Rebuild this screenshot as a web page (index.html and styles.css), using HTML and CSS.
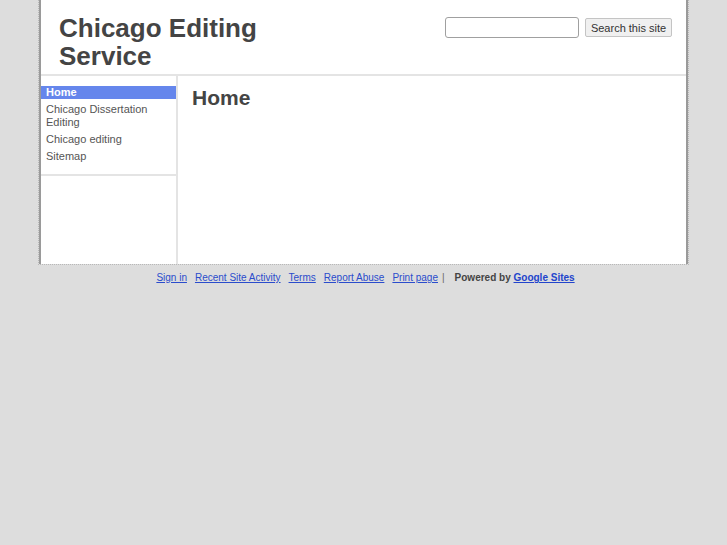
FILE: index.html
```html
<!DOCTYPE html>
<html lang="en">
<head>
<meta charset="utf-8">
<title>Chicago Editing Service</title>
<link rel="stylesheet" href="styles.css">
</head>
<body>
<div class="page">
  <div class="inner">
    <header class="header">
      <h1 class="site-title">Chicago Editing<br>Service</h1>
      <form class="search">
        <input class="search-input" type="text">
        <button class="search-btn" type="button">Search this site</button>
      </form>
    </header>
    <div class="main">
      <aside class="sidebar">
        <ul class="nav">
          <li class="nav-item current">Home</li>
          <li class="nav-item">Chicago Dissertation Editing</li>
          <li class="nav-item">Chicago editing</li>
          <li class="nav-item">Sitemap</li>
        </ul>
      </aside>
      <section class="content">
        <h2 class="page-title">Home</h2>
      </section>
    </div>
  </div>
</div>
<footer class="footer">
  <a class="flink" href="#">Sign in</a><a class="flink" href="#">Recent Site Activity</a><a class="flink" href="#">Terms</a><a class="flink" href="#">Report Abuse</a><a class="flink last" href="#">Print page</a><span class="sep">|</span><span class="powered">Powered by <a class="gs" href="#">Google Sites</a></span>
</footer>
</body>
</html>
```

FILE: styles.css
```css
html, body {
  margin: 0;
  padding: 0;
}
body {
  background: #dddddd;
  font-family: "Liberation Sans", Arial, sans-serif;
  color: #444;
}
.page {
  margin-left: 38px;
  width: 651px;
  box-sizing: border-box;
  border-left: 1px dotted #b8b8b8;
  border-right: 1px dotted #b8b8b8;
  border-bottom: 1px dotted #b8b8b8;
}
.inner {
  background: #fff;
  border-left: 2px solid #9a9a9a;
  border-right: 2px solid #9a9a9a;
}
.header {
  height: 76px;
  box-sizing: border-box;
  border-bottom: 2px solid #e4e4e4;
  display: flex;
  justify-content: space-between;
  align-items: flex-start;
  padding: 0 14px 0 18px;
}
.site-title {
  margin: 0;
  padding-top: 14px;
  font-size: 26px;
  line-height: 28px;
  font-weight: bold;
  color: #444;
}
.search {
  margin: 17px 0 0 0;
  display: flex;
  align-items: flex-start;
  gap: 6px;
}
.search-input {
  width: 134px;
  height: 21px;
  box-sizing: border-box;
  border: 1px solid #a0a0a0;
  border-radius: 3px;
  margin: 0;
  padding: 0;
  background: #fff;
}
.search-btn {
  width: 87px;
  height: 19px;
  margin-top: 1px;
  box-sizing: border-box;
  border: 1px solid #c4c4c4;
  border-radius: 2px;
  background: #f0f0f0;
  font-family: "Liberation Sans", Arial, sans-serif;
  font-size: 11px;
  color: #333;
  padding: 0;
}
.main {
  display: flex;
  height: 188px;
}
.sidebar {
  width: 135px;
  border-right: 2px solid #e4e4e4;
}
.nav {
  list-style: none;
  margin: 0;
  padding: 10px 0 11px;
  border-bottom: 2px solid #e4e4e4;
}
.nav-item {
  font-size: 11px;
  line-height: 13px;
  padding: 0 5px;
  margin-bottom: 4px;
  color: #555;
}
.nav-item:last-child {
  margin-bottom: 0;
}
.nav-item.current {
  background: #6586ec;
  color: #fff;
  font-weight: bold;
}
.content {
  flex: 1;
  padding: 10px 14px 0;
}
.page-title {
  margin: 0;
  font-size: 21px;
  line-height: 24px;
  font-weight: bold;
  color: #444;
}
.footer {
  width: 727px;
  text-align: center;
  font-size: 10px;
  line-height: 14px;
  padding-top: 6px;
  padding-left: 4px;
  box-sizing: border-box;
  color: #444;
}
.flink {
  color: #2a4ccc;
  text-decoration: underline;
  margin-right: 8px;
}
.flink.last {
  margin-right: 4px;
}
.sep {
  color: #666;
  margin-right: 10px;
}
.powered {
  font-weight: bold;
  color: #444;
}
.gs {
  color: #2244cc;
  text-decoration: underline;
}
```
